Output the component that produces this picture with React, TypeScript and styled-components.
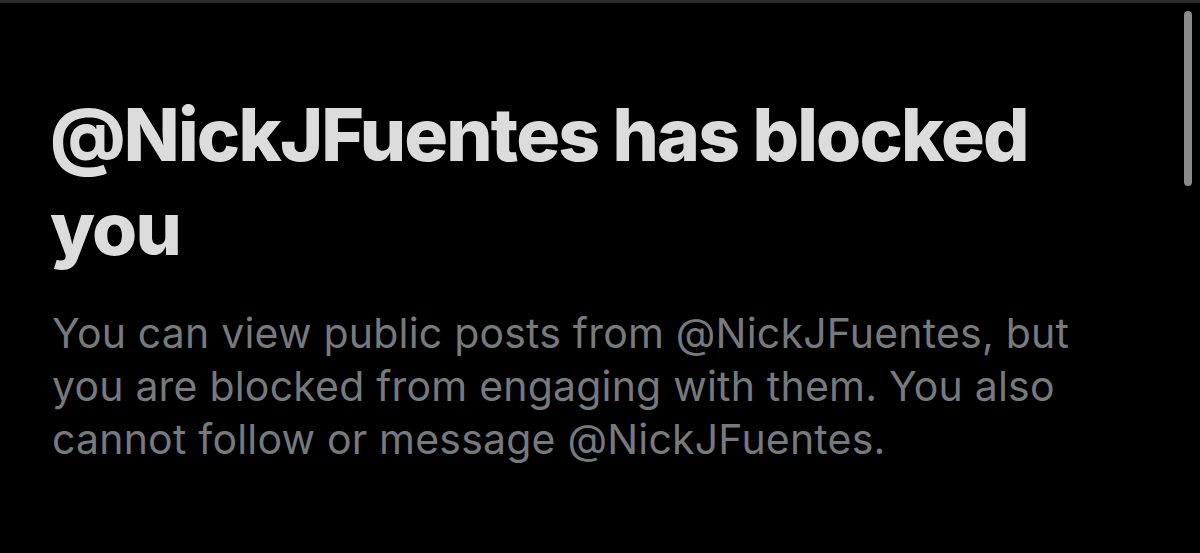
import React from "react";
import styled, { createGlobalStyle } from "styled-components";

const Global = createGlobalStyle`
  html, body { margin: 0; padding: 0; background: #000; }
  body { width: 1200px; height: 553px; overflow: hidden; }
`;

const Screen = styled.div`
  position: relative;
  width: 1200px;
  height: 553px;
  background: #000;
  border-top: 3px solid #2a2b2d;
  box-sizing: border-box;
  padding: 85px 0 0 50px;
  display: flex;
  flex-direction: column;
`;

const Title = styled.h1`
  margin: 0;
  font-family: Inter, "Liberation Sans", sans-serif;
  font-weight: 800;
  font-size: 73px;
  line-height: 94px;
  letter-spacing: -1.8px;
  color: #dcdcdc;
`;

const Body = styled.p`
  margin: 31px 0 0 2px;
  font-family: Inter, "Liberation Sans", sans-serif;
  font-weight: 400;
  font-size: 41px;
  line-height: 53px;
  letter-spacing: 0.2px;
  color: #76797d;
`;

const Line = styled.span`
  display: block;
  white-space: nowrap;
`;

const Scrollbar = styled.div`
  position: absolute;
  top: 8px;
  right: 8px;
  width: 8px;
  height: 175px;
  border-radius: 4px;
  background: #8a8a8a;
`;

export default function App() {
  return (
    <>
      <Global />
      <Screen>
        <Title>
          <Line>@NickJFuentes has blocked</Line>
          <Line>you</Line>
        </Title>
        <Body>
          <Line>You can view public posts from @NickJFuentes, but</Line>
          <Line>you are blocked from engaging with them. You also</Line>
          <Line>cannot follow or message @NickJFuentes.</Line>
        </Body>
        <Scrollbar />
      </Screen>
    </>
  );
}
